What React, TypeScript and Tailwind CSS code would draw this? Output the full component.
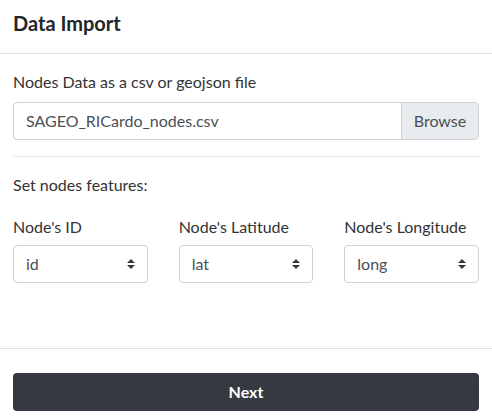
import React from "react"

const font = { fontFamily: "Lato, 'Noto Sans', sans-serif" }

function SelectBox({ value }: { value: string }) {
  return (
    <div className="relative h-[38px] rounded border border-[#ced4da] bg-white flex items-center pl-3 pr-8 text-base text-[#495057]">
      <span>{value}</span>
      <svg
        className="absolute right-3 top-1/2 -translate-y-1/2"
        width="8"
        height="10"
        viewBox="0 0 4 5"
      >
        <path fill="#343a40" d="M2 0L0 2h4zm0 5L0 3h4z" />
      </svg>
    </div>
  )
}

export default function App() {
  const fields = [
    { label: "Node's ID", value: "id" },
    { label: "Node's Latitude", value: "lat" },
    { label: "Node's Longitude", value: "long" },
  ]

  return (
    <div className="w-full min-h-[416px] bg-white text-[#212529]" style={font}>
      {/* Header */}
      <div className="px-[13px] pt-2 pb-[15px] border-b border-[#dee2e6]">
        <h5 className="text-xl font-bold leading-[30px]">Data Import</h5>
      </div>

      {/* Body */}
      <div className="px-[13px] pt-4 pb-[65px]">
        <label className="block text-base leading-6 mb-2 text-[#333]">
          Nodes Data as a csv or geojson file
        </label>
        <div className="flex h-[38px] rounded border border-[#ced4da] overflow-hidden">
          <div className="flex-1 flex items-center px-3 text-base text-[#495057]">
            SAGEO_RICardo_nodes.csv
          </div>
          <div className="w-[77px] flex items-center justify-center bg-[#e9ecef] border-l border-[#ced4da] text-base text-[#495057]">
            Browse
          </div>
        </div>

        <hr className="my-4 border-0 border-t border-[#e6e6e6]" />

        <p className="text-base leading-6 mb-[18px] text-[#333]">Set nodes features:</p>

        <div className="grid grid-cols-3 gap-[31px]">
          {fields.map((f) => (
            <div key={f.label}>
              <label className="block text-base leading-6 mb-[6px] text-[#333]">{f.label}</label>
              <SelectBox value={f.value} />
            </div>
          ))}
        </div>
      </div>

      {/* Footer */}
      <div className="px-[13px] pt-6 pb-[5px] border-t border-[#dee2e6]">
        <button className="w-full h-[38px] rounded bg-[#343a40] text-white text-base font-bold">
          Next
        </button>
      </div>
    </div>
  )
}
